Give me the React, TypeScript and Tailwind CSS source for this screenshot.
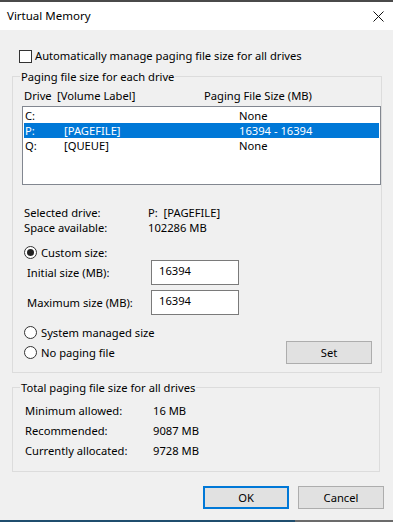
import { ReactNode } from "react";

const font = { fontFamily: '"Noto Sans", "DejaVu Sans", sans-serif' };

function Radio({ checked, children }: { checked?: boolean; children: ReactNode }) {
  return (
    <div className="flex h-[15px] items-center">
      <span className="flex h-[13px] w-[13px] items-center justify-center rounded-full border border-[#333333] bg-white">
        {checked && <span className="h-[7px] w-[7px] rounded-full bg-[#222222]" />}
      </span>
      <span className="ml-[4px]">{children}</span>
    </div>
  );
}

function Button({ children, focused, className }: { children: ReactNode; focused?: boolean; className?: string }) {
  return (
    <div
      className={
        "flex h-[23px] w-[86px] items-center justify-center bg-[#e1e1e1] " +
        (focused ? "border-2 border-[#0078d7] " : "border border-[#adadad] ") +
        (className ?? "")
      }
    >
      {children}
    </div>
  );
}

function DriveRow({ drive, label, size, selected }: { drive: string; label: string; size: string; selected?: boolean }) {
  return (
    <div className={"flex h-[15px] items-center " + (selected ? "bg-[#0078d7] text-white" : "")}>
      <span className="w-[40px] pl-[1px]">{drive}</span>
      <span className="w-[175px]">{label}</span>
      <span>{size}</span>
    </div>
  );
}

export default function App() {
  return (
    <div className="flex h-[522px] w-[393px] flex-col overflow-hidden text-[11.2px] leading-[14px] text-black" style={font}>
      <div className="h-[2px] bg-[#4a4a4a]" />
      <div className="flex h-[28px] items-center justify-between bg-white pl-[7px] pr-[9px]">
        <span className="text-[11.5px]">Virtual Memory</span>
        <svg width="11" height="11" viewBox="0 0 11 11">
          <path d="M0.5 0.5L10.5 10.5M10.5 0.5L0.5 10.5" stroke="#111" strokeWidth="1" />
        </svg>
      </div>

      <div className="flex flex-1 flex-col bg-[#f0f0f0]">
        <div className="ml-[19px] mt-[19px] flex h-[14px] items-center">
          <span className="h-[13px] w-[13px] border border-[#333333] bg-white" />
          <span className="ml-[3px]">Automatically manage paging file size for all drives</span>
        </div>

        <fieldset className="ml-[12px] mt-[6px] w-[368px] border border-[#dcdcdc] pb-[8px]">
          <legend className="ml-[7px] px-[1px] leading-[15px]">Paging file size for each drive</legend>
          <div className="mt-[4px] flex h-[15px] items-center pl-[11px]">
            <span className="w-[33px]">Drive</span>
            <span className="w-[147px]">[Volume Label]</span>
            <span>Paging File Size (MB)</span>
          </div>
          <div className="ml-[9px] mt-[3px] h-[79px] w-[359px] border border-[#828790] bg-white p-[1px]">
            <DriveRow drive="C:" label="" size="None" />
            <DriveRow drive="P:" label="[PAGEFILE]" size="16394 - 16394" selected />
            <DriveRow drive="Q:" label="[QUEUE]" size="None" />
          </div>

          <div className="mt-[20px] pl-[11px]">
            <div className="flex h-[15px] items-center">
              <span className="w-[124px]">Selected drive:</span>
              <span>P:&nbsp;&nbsp;[PAGEFILE]</span>
            </div>
            <div className="flex h-[15px] items-center">
              <span className="w-[124px]">Space available:</span>
              <span>102286 MB</span>
            </div>
          </div>

          <div className="mt-[10px] pl-[11px]">
            <Radio checked>Custom size:</Radio>
          </div>
          <div className="flex h-[25px] items-center pl-[14px]">
            <span className="w-[124px]">Initial size (MB):</span>
            <div className="h-[25px] w-[88px] border border-[#7a7a7a] bg-white pl-[7px] pt-[3px]">16394</div>
          </div>
          <div className="mt-[5px] flex h-[25px] items-center pl-[14px]">
            <span className="w-[124px]">Maximum size (MB):</span>
            <div className="h-[25px] w-[88px] border border-[#7a7a7a] bg-white pl-[7px] pt-[3px]">16394</div>
          </div>

          <div className="mt-[10px] pl-[11px]">
            <Radio>System managed size</Radio>
          </div>
          <div className="mt-[1px] flex h-[23px] items-center justify-between pl-[11px] pr-[9px]">
            <Radio>No paging file</Radio>
            <Button>Set</Button>
          </div>
        </fieldset>

        <fieldset className="ml-[12px] mt-[7px] w-[368px] border border-[#dcdcdc] pb-[13px] pl-[12px]">
          <legend className="-ml-[5px] px-[1px] leading-[15px]">Total paging file size for all drives</legend>
          <div className="mt-[8px] flex h-[15px] items-center">
            <span className="w-[128px]">Minimum allowed:</span>
            <span>16 MB</span>
          </div>
          <div className="mt-[5px] flex h-[15px] items-center">
            <span className="w-[128px]">Recommended:</span>
            <span>9087 MB</span>
          </div>
          <div className="mt-[5px] flex h-[15px] items-center">
            <span className="w-[128px]">Currently allocated:</span>
            <span>9728 MB</span>
          </div>
        </fieldset>

        <div className="mt-[14px] flex justify-end gap-[9px] pr-[9px]">
          <Button focused>OK</Button>
          <Button>Cancel</Button>
        </div>
      </div>
      <div className="flex h-[2px]">
        <div className="w-[295px] bg-[#1f4e6e]" />
        <div className="flex-1 bg-[#6b6b6b]" />
      </div>
    </div>
  );
}
